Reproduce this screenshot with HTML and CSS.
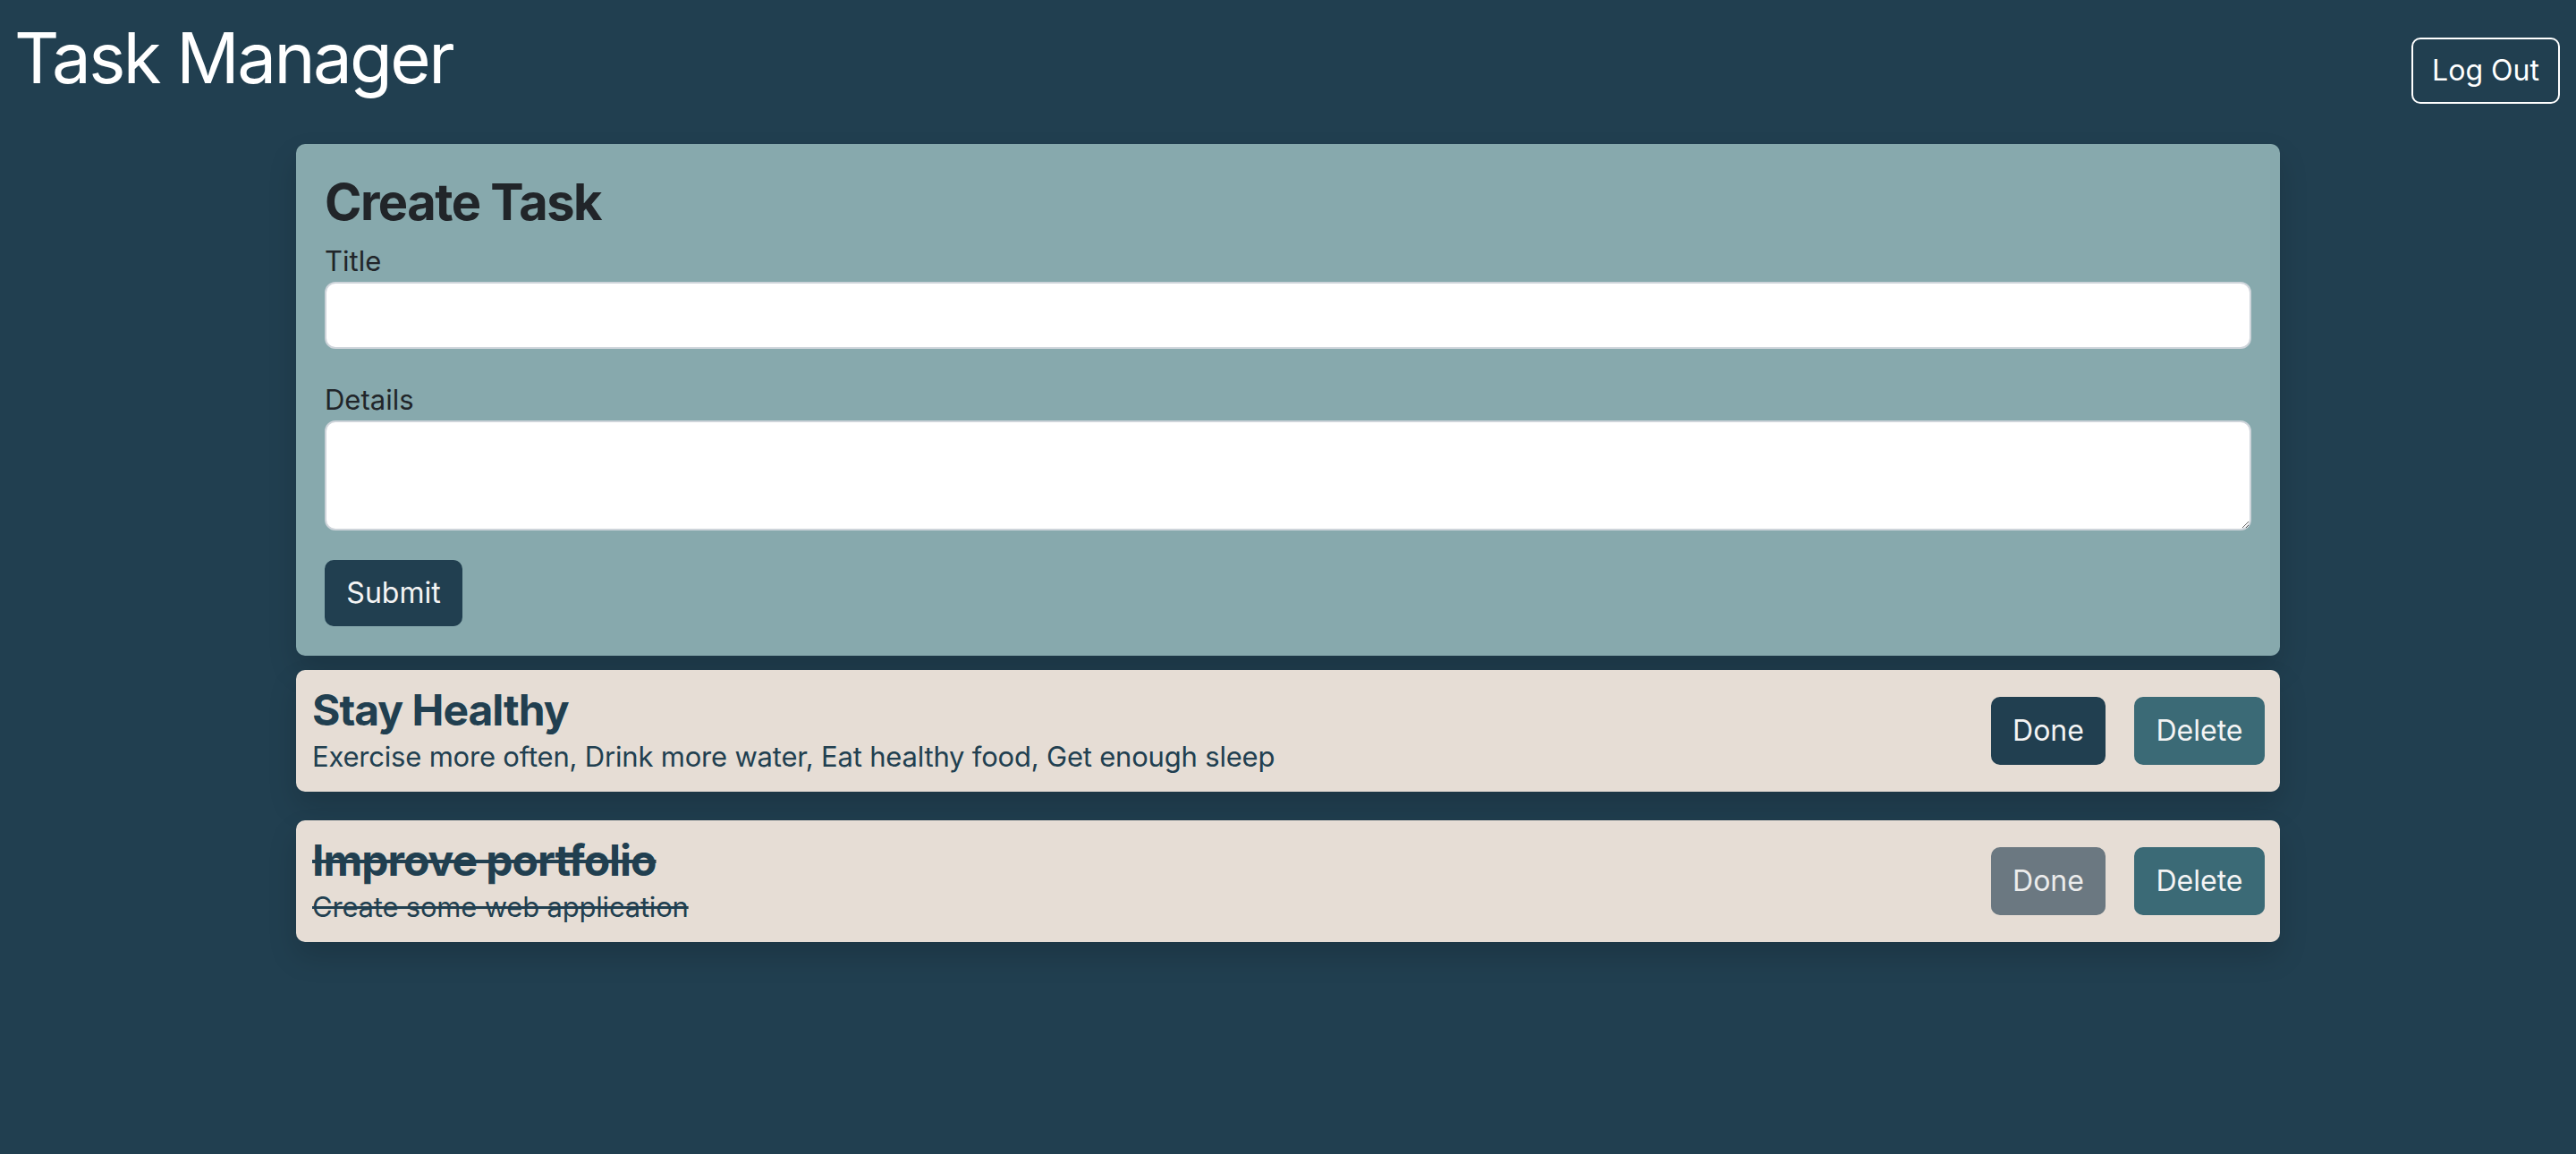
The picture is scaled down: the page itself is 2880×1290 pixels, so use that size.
FILE: index.html
```html
<!DOCTYPE html>
<html lang="en">
<head>
<meta charset="utf-8">
<title>Task Manager</title>
<link rel="stylesheet" href="styles.css">
</head>
<body>
<header class="topbar">
  <h1 class="brand">Task Manager</h1>
  <button class="btn btn-logout" type="button">Log Out</button>
</header>
<main class="content">
  <section class="create-card">
    <h2 class="create-title">Create Task</h2>
    <form class="task-form">
      <label class="field-label" for="title">Title</label>
      <input class="field-input" id="title" type="text">
      <label class="field-label" for="details">Details</label>
      <textarea class="field-textarea" id="details" rows="2"></textarea>
      <button class="btn btn-submit" type="button">Submit</button>
    </form>
  </section>
  <ul class="task-list">
    <li class="task-card">
      <div class="task-text">
        <h4 class="task-title">Stay Healthy</h4>
        <p class="task-desc">Exercise more often, Drink more water, Eat healthy food, Get enough sleep</p>
      </div>
      <div class="task-actions">
        <button class="btn btn-done" type="button">Done</button>
        <button class="btn btn-delete" type="button">Delete</button>
      </div>
    </li>
    <li class="task-card is-done">
      <div class="task-text">
        <h4 class="task-title">Improve portfolio</h4>
        <p class="task-desc">Create some web application</p>
      </div>
      <div class="task-actions">
        <button class="btn btn-done btn-disabled" type="button">Done</button>
        <button class="btn btn-delete" type="button">Delete</button>
      </div>
    </li>
  </ul>
</main>
</body>
</html>
```

FILE: styles.css
```css
* { box-sizing: border-box; }

html, body { height: 100%; }

body {
  margin: 0;
  background: #213f50;
  font-family: Inter, "Noto Sans", "Liberation Sans", sans-serif;
  color: #212529;
}

.topbar {
  display: flex;
  justify-content: space-between;
  align-items: flex-start;
  padding: 17px 18px 0 16px;
}

.brand {
  margin: 0;
  font-size: 78px;
  font-weight: 400;
  line-height: 96px;
  color: #ffffff;
  letter-spacing: -2.6px;
}

.btn {
  font-family: inherit;
  font-size: 32px;
  line-height: 48px;
  border-radius: 10px;
  border: 2px solid transparent;
  color: #f4f4f4;
  cursor: pointer;
  padding: 0;
  display: inline-flex;
  align-items: center;
  justify-content: center;
}

.btn-logout {
  margin-top: 25px;
  width: 166px;
  height: 74px;
  background: transparent;
  border-color: #ffffff;
  color: #ffffff;
}

.content {
  width: 2218px;
  margin: 45px auto 0;
}

.create-card {
  background: #87a9ad;
  border-radius: 10px;
  padding: 32px 32px 33px;
  box-shadow: 0 16px 32px rgba(0, 0, 0, 0.15);
}

.create-title {
  margin: 0 0 8px;
  font-size: 56px;
  line-height: 67px;
  font-weight: 700;
  color: #212529;
  letter-spacing: -1.5px;
}

.task-form {
  display: flex;
  flex-direction: column;
  align-items: flex-start;
}

.field-label {
  display: block;
  font-size: 31px;
  line-height: 47px;
  color: #212529;
}

.field-input {
  width: 100%;
  height: 75px;
  border: 2px solid #ced4da;
  border-radius: 12px;
  background: #ffffff;
  margin-bottom: 33px;
  font-family: inherit;
  font-size: 32px;
  padding: 0 24px;
}

.field-textarea {
  width: 100%;
  height: 123px;
  border: 2px solid #ced4da;
  border-radius: 12px;
  background: #ffffff;
  margin: 0 0 33px;
  font-family: inherit;
  font-size: 32px;
  padding: 12px 24px;
  resize: vertical;
  display: block;
}

.btn-submit {
  width: 154px;
  height: 74px;
  background: #213f50;
  border-color: #213f50;
}

.task-list {
  list-style: none;
  margin: 16px 0 0;
  padding: 0;
  display: flex;
  flex-direction: column;
  gap: 32px;
}

.task-card {
  display: flex;
  justify-content: space-between;
  align-items: center;
  background: #e6ddd5;
  border-radius: 10px;
  padding: 15px 17px 16px 18px;
  min-height: 136px;
  box-shadow: 0 16px 32px rgba(0, 0, 0, 0.15);
}

.task-title {
  margin: 0;
  font-size: 48px;
  line-height: 57px;
  font-weight: 700;
  color: #213f50;
  letter-spacing: -1px;
}

.task-desc {
  margin: 0;
  font-size: 31px;
  line-height: 47px;
  color: #213f50;
  letter-spacing: -0.2px;
}

.is-done .task-title,
.is-done .task-desc {
  text-decoration: line-through;
}

.task-actions {
  display: flex;
  gap: 32px;
}

.btn-done {
  width: 128px;
  height: 76px;
  background: #213f50;
  border-color: #213f50;
}

.btn-disabled {
  background: #6b7881;
  border-color: #6b7881;
  color: #ececec;
}

.btn-delete {
  width: 146px;
  height: 76px;
  background: #3b6a76;
  border-color: #3b6a76;
}
```
